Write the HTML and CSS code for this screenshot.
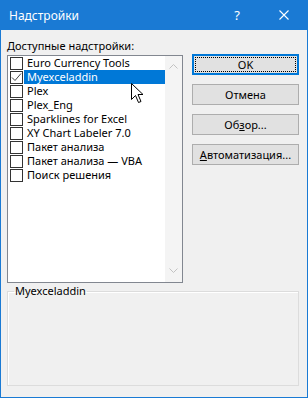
FILE: index.html
```html
<!DOCTYPE html>
<html lang="ru">
<head>
    <meta charset="UTF-8">
    <title>Надстройки</title>
    <link rel="stylesheet" href="styles.css">
</head>
<body>
    <div class="window">
        <div class="titlebar">
            <span class="title">Надстройки</span>
            <span class="help">?</span>
            <svg class="close" width="10" height="10" viewBox="0 0 10 10">
                <path d="M0.5 0.5 L9.5 9.5 M9.5 0.5 L0.5 9.5" stroke="#fff" stroke-width="1.1" fill="none"/>
            </svg>
        </div>

        <div class="client">
            <div class="top">
                <div class="left">
                    <div class="caption">Доступные надстройки:</div>
                    <div class="listbox">
                        <ul class="items">
                            <li><span class="check"></span><span class="name">Euro Currency Tools</span></li>
                            <li class="selected">
                                <span class="check">
                                    <svg width="11" height="11" viewBox="0 0 11 11"><path d="M1 5.5 L4 8.5 L10 1.5" stroke="#444" stroke-width="1" fill="none"/></svg>
                                </span>
                                <span class="name">Myexceladdin</span>
                            </li>
                            <li><span class="check"></span><span class="name">Plex</span></li>
                            <li><span class="check"></span><span class="name">Plex_Eng</span></li>
                            <li><span class="check"></span><span class="name">Sparklines for Excel</span></li>
                            <li><span class="check"></span><span class="name">XY Chart Labeler 7.0</span></li>
                            <li><span class="check"></span><span class="name">Пакет анализа</span></li>
                            <li><span class="check"></span><span class="name">Пакет анализа — VBA</span></li>
                            <li><span class="check"></span><span class="name">Поиск решения</span></li>
                        </ul>
                        <div class="scrollbar">
                            <svg width="9" height="5" viewBox="0 0 9 5"><path d="M0.5 4.5 L4.5 0.5 L8.5 4.5" stroke="#c2c2c2" fill="none"/></svg>
                            <svg width="9" height="5" viewBox="0 0 9 5"><path d="M0.5 0.5 L4.5 4.5 L8.5 0.5" stroke="#c2c2c2" fill="none"/></svg>
                        </div>
                        <svg class="cursor" width="13" height="21" viewBox="0 0 13 21">
                            <path d="M0.5 0.5 L0.5 16.5 L4.5 12.5 L7.5 19.5 L10 18.5 L7 11.5 L12 11.5 Z" fill="#fff" stroke="#000" stroke-width="1" stroke-linejoin="miter"/>
                        </svg>
                    </div>
                </div>

                <div class="buttons">
                    <button class="default">OK</button>
                    <button>Отмена</button>
                    <button>Об<u>з</u>ор...</button>
                    <button><u>А</u>втоматизация...</button>
                </div>
            </div>

            <fieldset class="group">
                <legend>Myexceladdin</legend>
                <div class="group-body"></div>
            </fieldset>
        </div>
    </div>
</body>
</html>
```

FILE: styles.css
```css
body { margin: 0; font-family: "Noto Sans", "Liberation Sans", sans-serif; font-size: 11px; color: #000; }
.window { width: 308px; height: 398px; box-sizing: border-box; border: 1px solid #1a7ad4; border-top: none; background: #f0f0f0; }
.titlebar { height: 30px; background: #1a7ad4; color: #fff; display: flex; align-items: center; padding: 0 0 0 9px; margin: 0 -1px; }
.title { flex: 1; font-size: 12px; }
.help { font-size: 13px; margin-right: 39px; }
.close { margin-right: 19px; }
.client { padding: 8px 8px 10px 6px; }
.top { display: flex; gap: 9px; }
.left { width: 176px; }
.caption { line-height: 15px; margin-bottom: 2px; }
.listbox { position: relative; height: 228px; box-sizing: border-box; border: 1px solid #828790; background: #fff; display: flex; }
.items { flex: 1; list-style: none; margin: 0; padding: 0; }
.items li { height: 14px; display: flex; align-items: center; }
.check { width: 11px; height: 11px; border: 1px solid #333; background: #fff; margin-left: 2px; margin-right: 1px; display: flex; flex: none; }
.name { flex: 1; height: 14px; line-height: 14px; padding-left: 3px; white-space: nowrap; }
.selected .name { background: #0078d7; color: #fff; }
.scrollbar { width: 17px; background: #f4f4f4; display: flex; flex-direction: column; align-items: center; justify-content: space-between; padding: 8px 0 9px; box-sizing: border-box; }
.cursor { position: absolute; left: 123px; top: 27px; }
.buttons { width: 107px; margin-top: 16px; display: flex; flex-direction: column; gap: 9px; }
button { height: 21px; font-family: inherit; font-size: 11px; color: #000; background: #e1e1e1; border: 1px solid #adadad; padding: 0; }
button.default { border-color: #0078d7; box-shadow: inset 0 0 0 1px #0078d7; outline: 1px dotted #000; outline-offset: -4px; }
.group { margin: 1px 0 0 0; padding: 0; border: 1px solid #dcdcdc; box-shadow: inset 1px 1px 0 #fff; }
.group legend { margin-left: 6px; padding: 0 1px; line-height: 14px; }
.group-body { height: 87px; }
```
